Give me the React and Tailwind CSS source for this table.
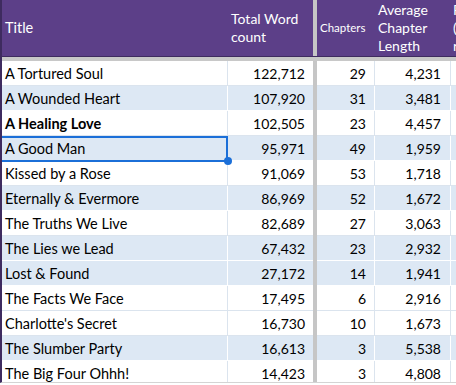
const rows = [
  { title: 'A Tortured Soul', words: '122,712', chapters: 29, avg: '4,231', band: false },
  { title: 'A Wounded Heart', words: '107,920', chapters: 31, avg: '3,481', band: true },
  { title: 'A Healing Love', words: '102,505', chapters: 23, avg: '4,457', band: false, bold: true },
  { title: 'A Good Man', words: '95,971', chapters: 49, avg: '1,959', band: true, selected: true },
  { title: 'Kissed by a Rose', words: '91,069', chapters: 53, avg: '1,718', band: false },
  { title: 'Eternally & Evermore', words: '86,969', chapters: 52, avg: '1,672', band: true },
  { title: 'The Truths We Live', words: '82,689', chapters: 27, avg: '3,063', band: false },
  { title: 'The Lies we Lead', words: '67,432', chapters: 23, avg: '2,932', band: true },
  { title: 'Lost & Found', words: '27,172', chapters: 14, avg: '1,941', band: true },
  { title: 'The Facts We Face', words: '17,495', chapters: 6, avg: '2,916', band: false },
  { title: "Charlotte's Secret", words: '16,730', chapters: 10, avg: '1,673', band: false },
  { title: 'The Slumber Party', words: '16,613', chapters: 3, avg: '5,538', band: true },
  { title: 'The Big Four Ohhh!', words: '14,423', chapters: 3, avg: '4,808', band: false },
]

function Row({ r }) {
  // banded rows get white gridlines, plain rows get faint blue-grey ones
  const bg = r.band ? 'bg-[#dde8f4]' : 'bg-white'
  const line = r.band ? 'border-white' : 'border-[#dbe4ee]'
  return (
    <div className={`relative flex h-[25px] ${bg} ${r.selected ? 'z-10' : ''}`}>
      <div className={`w-[226px] shrink-0 border-r border-b ${line} pl-[3px] pt-[1px] flex items-center text-[14.5px] ${r.bold ? 'font-bold' : ''}`}>
        {r.title}
      </div>
      <div className={`w-[85px] shrink-0 border-b ${line} pr-[8px] flex items-center justify-end`}>{r.words}</div>
      <div className="w-[4px] shrink-0 bg-[#c6c6c6]" />
      <div className={`w-[58px] shrink-0 border-r border-b ${line} pr-[8px] flex items-center justify-end`}>{r.chapters}</div>
      <div className={`w-[76px] shrink-0 border-r border-b ${line} pr-[9px] flex items-center justify-end`}>{r.avg}</div>
      <div className={`flex-1 border-b ${line}`} />
      {r.selected && (
        <>
          <div className="absolute left-[-2px] top-0 w-[228px] h-[26px] border-2 border-[#1b6fd8]" />
          <div className="absolute left-[222px] top-[21px] w-[8px] h-[8px] rounded-full bg-[#1b6fd8]" />
        </>
      )}
    </div>
  )
}

export default function App() {
  return (
    <div className="w-[456px] h-[385px] overflow-hidden bg-white text-[14px] text-black" style={{ fontFamily: 'Lato, "Open Sans", sans-serif' }}>
      <div className="h-[383px] overflow-hidden border-l-2 border-[#3e2b5f] border-b border-b-[#d4d4d4]">
        <div className="flex h-[57px] bg-[#5c3f88] text-white border-b border-[#3e2b5f] leading-[18px]">
          <div className="w-[226px] shrink-0 pl-[3px] flex items-center text-[14.5px]">Title</div>
          <div className="w-[85px] shrink-0 pl-[3px] flex items-center">Total Word<br />count</div>
          <div className="w-[4px] shrink-0 bg-[#c6c6c6]" />
          <div className="w-[58px] shrink-0 pl-[3px] flex items-center text-[11.5px]">Chapters</div>
          <div className="w-[76px] shrink-0 pl-[3px] flex items-center">Average<br />Chapter<br />Length</div>
          <div className="flex-1 min-w-0 overflow-hidden pl-[2px] flex items-center whitespace-nowrap">Pages<br />(est.)<br />read</div>
        </div>
        <div className="h-[4px] bg-[#c8c8c8]" />
        {rows.map((r) => (
          <Row key={r.title} r={r} />
        ))}
      </div>
    </div>
  )
}
